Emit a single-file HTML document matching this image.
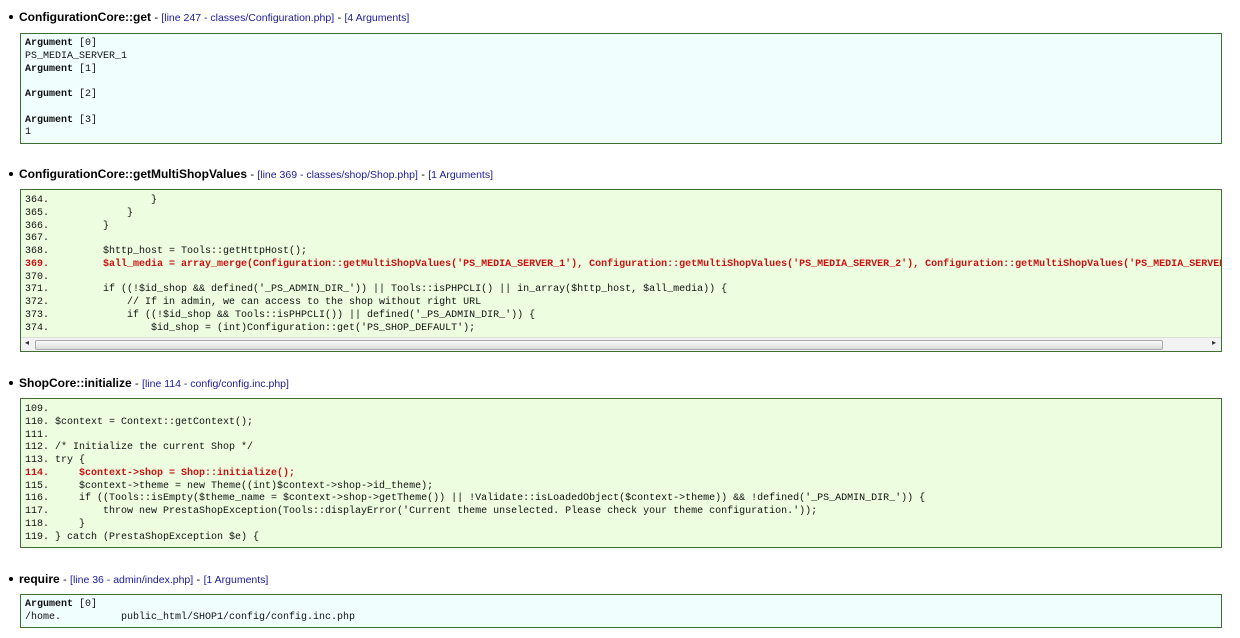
<!DOCTYPE html>
<html><head><meta charset="utf-8"><style>
body{margin:0;width:1240px;height:638px;background:#fff;position:relative;overflow:hidden;font-family:"Liberation Sans","DejaVu Sans",sans-serif}
.h{position:absolute;left:9px;font-size:12px;font-weight:bold;color:#000;white-space:nowrap}
.h .b{display:inline-block;width:4px;height:4px;border-radius:50%;background:#000;vertical-align:middle;margin-right:6px;position:relative;top:-1px}
.h .l{font-weight:normal;font-size:10.5px;color:#1a1a9a}
.h .d{font-weight:normal;font-size:11px;color:#000}
.box{position:absolute;left:20px;width:1200px;border:1px solid #3f6f33;overflow:hidden}
.cy{background:#f0fffe}.gr{background:#ecfde0}
pre{margin:0;position:absolute;left:4px;font-family:"Liberation Mono","DejaVu Sans Mono",monospace;font-size:10px;line-height:12.75px;color:#111;white-space:pre}
pre b{font-weight:bold}
.r{color:#cc1111;font-weight:bold}
.sb{position:absolute;left:0;right:0;bottom:0;height:13px;background:#f2f2f2;border-top:1px solid #ddd}
.th{position:absolute;left:14px;width:1126px;top:2px;height:8px;background:linear-gradient(#fafafa,#dcdcdc);border:1px solid #aaa;border-radius:2px}
</style></head><body>
<div class="h" style="top:10px"><span class="b"></span>ConfigurationCore::get <span class="d">-</span> <span class="l">[line 247 - classes/Configuration.php]</span> <span class="d">-</span> <span class="l">[4 Arguments]</span></div>
<div class="box cy" style="top:33px;height:109px"><pre style="top:4px"><b>Argument</b> [0]
PS_MEDIA_SERVER_1
<b>Argument</b> [1]

<b>Argument</b> [2]

<b>Argument</b> [3]
1</pre></div>

<div class="h" style="top:167px"><span class="b"></span>ConfigurationCore::getMultiShopValues <span class="d">-</span> <span class="l">[line 369 - classes/shop/Shop.php]</span> <span class="d">-</span> <span class="l">[1 Arguments]</span></div>
<div class="box gr" style="top:189px;height:161px"><pre style="top:5px">364.                 }
365.             }
366.         }
367.
368.         $http_host = Tools::getHttpHost();
<span class="r">369.         $all_media = array_merge(Configuration::getMultiShopValues('PS_MEDIA_SERVER_1'), Configuration::getMultiShopValues('PS_MEDIA_SERVER_2'), Configuration::getMultiShopValues('PS_MEDIA_SERVER_3'));</span>
370.
371.         if ((!$id_shop &amp;&amp; defined('_PS_ADMIN_DIR_')) || Tools::isPHPCLI() || in_array($http_host, $all_media)) {
372.             // If in admin, we can access to the shop without right URL
373.             if ((!$id_shop &amp;&amp; Tools::isPHPCLI()) || defined('_PS_ADMIN_DIR_')) {
374.                 $id_shop = (int)Configuration::get('PS_SHOP_DEFAULT');</pre>
<div class="sb"><span style="position:absolute;left:4px;top:0;font-size:8px;color:#333">◂</span><div class="th"></div><span style="position:absolute;right:5px;top:0;font-size:8px;color:#333">▸</span></div></div>

<div class="h" style="top:376px"><span class="b"></span>ShopCore::initialize <span class="d">-</span> <span class="l">[line 114 - config/config.inc.php]</span></div>
<div class="box gr" style="top:398px;height:148px"><pre style="top:5px">109.
110. $context = Context::getContext();
111.
112. /* Initialize the current Shop */
113. try {
<span class="r">114.     $context-&gt;shop = Shop::initialize();</span>
115.     $context-&gt;theme = new Theme((int)$context-&gt;shop-&gt;id_theme);
116.     if ((Tools::isEmpty($theme_name = $context-&gt;shop-&gt;getTheme()) || !Validate::isLoadedObject($context-&gt;theme)) &amp;&amp; !defined('_PS_ADMIN_DIR_')) {
117.         throw new PrestaShopException(Tools::displayError('Current theme unselected. Please check your theme configuration.'));
118.     }
119. } catch (PrestaShopException $e) {</pre></div>

<div class="h" style="top:572px"><span class="b"></span>require <span class="d">-</span> <span class="l">[line 36 - admin/index.php]</span> <span class="d">-</span> <span class="l">[1 Arguments]</span></div>
<div class="box cy" style="top:594px;height:32px"><pre style="top:4px"><b>Argument</b> [0]
/home.          public_html/SHOP1/config/config.inc.php</pre></div>
</body></html>
